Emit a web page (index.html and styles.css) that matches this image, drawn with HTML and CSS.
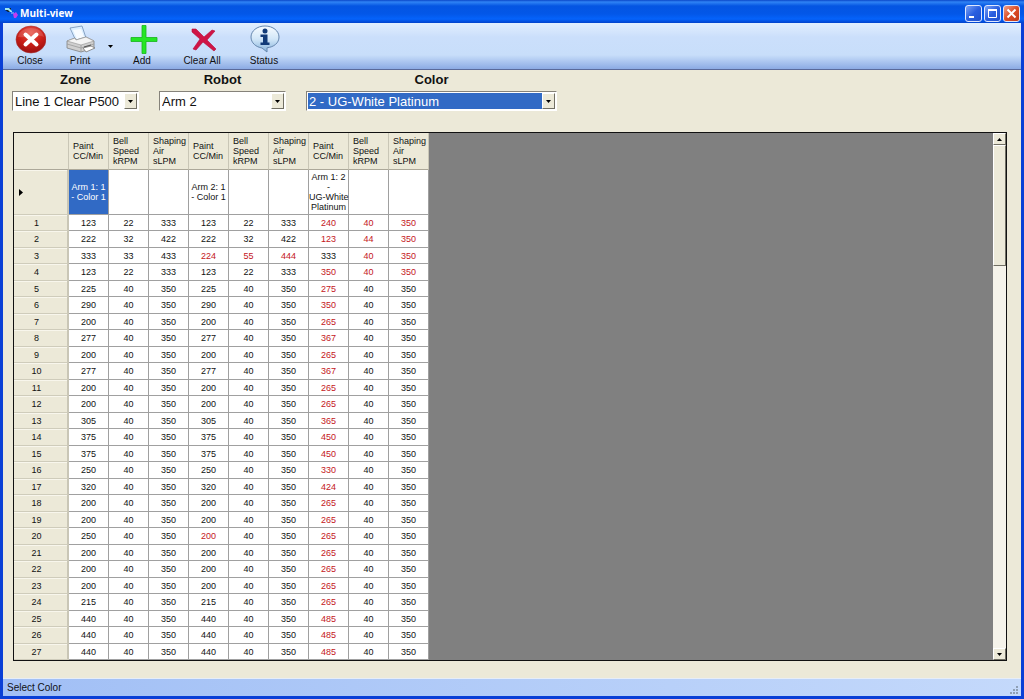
FILE: index.html
```html
<!DOCTYPE html>
<html lang="en">
<head>
<meta charset="utf-8">
<title>Multi-view</title>
<link rel="stylesheet" href="styles.css">
</head>
<body>
<div class="window">
  <header class="titlebar">
    <svg class="app-icon" width="14" height="12" viewBox="0 0 14 12"><path d="M0 1h6v4H3L0 3z" fill="#123"/><path d="M0 1h4l3 3v1H5L3 3H0z" fill="#9fe6ee"/><path d="M6 6h3" stroke="#b8c8ff"/><path d="M8 7l3-2 2 3-2 3H9z" fill="#c43cf0"/></svg>
    <h1 class="title">Multi-view</h1>
    <div class="captions">
      <button class="cap" aria-label="Minimize"><svg width="15" height="15" viewBox="0 0 15 15"><path d="M3 11h5" stroke="#fff" stroke-width="2"/></svg></button>
      <button class="cap" aria-label="Maximize"><svg width="15" height="15" viewBox="0 0 15 15"><path d="M3.500 4v7.500h8V4" fill="none" stroke="#fff"/><path d="M3 4h9" stroke="#fff" stroke-width="2"/></svg></button>
      <button class="cap cap-close" aria-label="Close window"><svg width="15" height="15" viewBox="0 0 15 15"><path d="M3.500 3.500l8 8M11.500 3.500l-8 8" stroke="#fff" stroke-width="2"/></svg></button>
    </div>
  </header>
  <nav class="toolbar">
    <button class="tool tool-close"><svg width="32" height="30" viewBox="0 0 32 30"><defs><radialGradient id="red" cx=".5" cy=".25" r=".75"><stop offset="0" stop-color="#e8564a"/><stop offset=".55" stop-color="#cc1f18"/><stop offset="1" stop-color="#9c1010"/></radialGradient></defs><ellipse cx="17" cy="14.500" rx="15" ry="13.500" fill="url(#red)" stroke="#a33" stroke-width=".6"/><path d="M4 12C6 0 28 0 30 12 21 8 13 13 4 12z" fill="#fff" opacity=".15"/><path d="M11.500 9.500l11 10M22.500 9.500l-11 10" stroke="#fff" stroke-width="4" stroke-linecap="round"/></svg><span>Close</span></button>
    <button class="tool tool-print"><svg width="32" height="30" viewBox="0 0 32 30"><path d="M6 3l12-2 4 12-10 3z" fill="#dbeeff" stroke="#7390b5" stroke-width=".8"/><path d="M9 5l8-1 3 8-7 2z" fill="#f7fbff"/><path d="M3 16l8-3 1 2 10-3 8 4v7l-13 4-14-4z" fill="#cfcfcf" stroke="#808080" stroke-width=".8"/><path d="M3 16l8-3 1 2 10-3 8 4-13 4z" fill="#f4f4f4" stroke="#929292" stroke-width=".6"/><path d="M17 20v7M3 19l14 4 13-4" fill="none" stroke="#9a9a9a" stroke-width=".8"/><path d="M19 23l8-2 4 2-9 4z" fill="#fff" stroke="#777" stroke-width=".8"/><path d="M20 22l7-2" stroke="#555"/></svg><span>Print</span></button>
    <button class="drop" aria-label="Print options"><svg width="5" height="3" viewBox="0 0 5 3"><path d="M0 0h5L2.500 3z"/></svg></button>
    <button class="tool tool-add"><svg width="32" height="30" viewBox="0 0 32 30"><path d="M16 .5h4v12h11v4H20v12h-4v-12H5v-4h11z" fill="#25e625" stroke="#17b51c" stroke-width=".8"/></svg><span>Add</span></button>
    <button class="tool tool-clear"><svg width="32" height="30" viewBox="0 0 32 30"><path d="M6 4l4 0 8 8 8-7 3 1-8 9 9 9-2 2-11-9-7 8-3-1 7-10-8-7z" fill="#cf1446" stroke="#b50a35" stroke-width=".6"/></svg><span>Clear All</span></button>
    <button class="tool tool-status"><svg width="32" height="30" viewBox="0 0 32 30"><defs><linearGradient id="bub" x2="0" y2="1"><stop offset="0" stop-color="#f8fcff"/><stop offset=".5" stop-color="#d2e7f8"/><stop offset="1" stop-color="#86b3dc"/></linearGradient></defs><path d="M17 1C9 1 3 6 3 12 3 18 8 22 14 23l5 4 0-4.200C26 22 31 18 31 12 31 6 25 1 17 1z" fill="url(#bub)" stroke="#6788ae"/><circle cx="17" cy="6" r="2.500" fill="#123b78"/><path d="M12.500 9.500h7v8h2v2.500h-9v-2.500h2.500v-5.500h-2.500z" fill="#123b78"/></svg><span>Status</span></button>
  </nav>
  <main class="content">
    <form class="filters">
      <div class="field field-zone"><label for="zone">Zone</label><div class="combo"><select id="zone"><option>Line 1 Clear P500</option></select><span class="arrow"><svg width="5" height="3" viewBox="0 0 5 3"><path d="M0 0h5L2.500 3z"/></svg></span></div></div>
      <div class="field field-robot"><label for="robot">Robot</label><div class="combo"><select id="robot"><option>Arm 2</option></select><span class="arrow"><svg width="5" height="3" viewBox="0 0 5 3"><path d="M0 0h5L2.500 3z"/></svg></span></div></div>
      <div class="field field-color"><label for="color">Color</label><div class="combo active"><select id="color"><option>2 - UG-White Platinum</option></select><span class="arrow"><svg width="5" height="3" viewBox="0 0 5 3"><path d="M0 0h5L2.500 3z"/></svg></span></div></div>
    </form>
    <section class="grid">
      <div class="viewport">
        <table class="data">
          <thead>
            <tr><th class="corner"></th><th>Paint<br>CC/Min</th><th>Bell<br>Speed<br>kRPM</th><th>Shaping<br>Air<br>sLPM</th><th>Paint<br>CC/Min</th><th>Bell<br>Speed<br>kRPM</th><th>Shaping<br>Air<br>sLPM</th><th>Paint<br>CC/Min</th><th>Bell<br>Speed<br>kRPM</th><th>Shaping<br>Air<br>sLPM</th></tr>
            <tr class="arms"><th class="rowhead"><svg width="4" height="7" viewBox="0 0 4 7"><path d="M0 0l4 3.500L0 7z"/></svg></th><td class="selected">Arm 1: 1<br>- Color 1</td><td></td><td></td><td>Arm 2: 1<br>- Color 1</td><td></td><td></td><td>Arm 1: 2<br>-<br>UG-White<br>Platinum</td><td></td><td></td></tr>
          </thead>
          <tbody id="rows"></tbody>
        </table>
      </div>
      <div class="scroll">
        <button class="step" aria-label="Scroll up"><svg width="5" height="3" viewBox="0 0 5 3"><path d="M0 3h5L2.500 0z"/></svg></button>
        <div class="track"><div class="thumb"></div></div>
        <button class="step" aria-label="Scroll down"><svg width="5" height="3" viewBox="0 0 5 3"><path d="M0 0h5L2.500 3z"/></svg></button>
      </div>
    </section>
  </main>
  <footer class="status"><span>Select Color</span><svg width="10" height="10" viewBox="0 0 10 10"><path d="M7 1h2M4 4h2M7 4h2M1 7h2M4 7h2M7 7h2" stroke="#8e9fb5" stroke-width="2"/></svg></footer>
</div>
<script src="grid.js"></script>
</body>
</html>
```
FILE: styles.css
```css
* { box-sizing: border-box; }
body { margin: 0; font-family: "Liberation Sans", Arial, sans-serif; font-size: 10px; color: #111; }
button { font: inherit; color: inherit; border: 0; padding: 0; background: none; }
svg { display: block; }

.window { height: 100vh; display: flex; flex-direction: column; border: 3px solid #0a3fd6; border-top: 0; background: #ece9d8; }
.titlebar { flex: none; height: 23px; margin: 0 -3px; padding: 3px 4px 0 5px; display: flex; align-items: center; background: linear-gradient(#0a47c8, #2f83f5 2px, #0455e2 6px, #0357e8 14px, #0563fb 19px, #0243cc); }
.title { flex: 1; margin: 0 0 0 1px; font: bold 10px "Open Sans", sans-serif; color: #fff; }
.captions { display: flex; gap: 2px; }
.cap { width: 17px; height: 17px; border: 1px solid #dfe8ff; border-radius: 3px; background: linear-gradient(135deg, #7ba2f5, #2a5fe0 50%, #1f50cc); }
.cap-close { background: linear-gradient(135deg, #f0a088, #dc4d26 50%, #c23a18); }

.toolbar { flex: none; height: 47px; display: flex; border-bottom: 1px solid #5a6a9a; background: linear-gradient(#e2effe, #cbdffb 14px, #c8defa 32px, #8cabe4); }
.tool { display: flex; flex-direction: column; align-items: center; line-height: 12px; padding-top: 2px; }
.tool span { white-space: nowrap; }
.tool-close { width: 54px; }
.tool-print { width: 46px; }
.drop { width: 14px; }
.drop svg { margin: 0 auto; }
.tool-add { width: 50px; }
.tool-clear { width: 70px; }
.tool-status { width: 54px; }

.content { flex: 1; min-height: 0; display: flex; flex-direction: column; padding: 2px 14px 17px 10px; }
.filters { display: flex; align-items: flex-start; margin: 0 0 21px -1px; gap: 20px; }
.field { display: flex; flex-direction: column; gap: 4px; }
.field label { text-align: center; font-size: 13px; line-height: 15px; font-weight: bold; }
.field-zone, .field-robot { width: 127px; }
.field-color { width: 251px; }
.combo { display: flex; height: 20px; border: 1px solid; border-color: #85827a #fff #fff #85827a; background: #fff; padding: 1px; }
.combo select { flex: 1; min-width: 0; appearance: none; border: 0; border-radius: 0; padding: 0 1px; background: #fff; color: #111; font: 13px "Liberation Sans", Arial, sans-serif; }
.combo.active select { background: #316ac5; color: #fff; }
.arrow { flex: none; width: 13px; display: grid; place-items: center; background: #ece9d8; border: 1px solid; border-color: #fff #716f64 #716f64 #fff; }

.grid { flex: 1; min-height: 0; display: flex; border: 1px solid #111; background: #808080; }
.viewport { flex: 1; min-width: 0; overflow: hidden; }
.data { width: 415px; table-layout: fixed; border-collapse: separate; border-spacing: 0; background: #fff; font-size: 9px; line-height: 10px; }
.data th { font-weight: normal; background: #ece9d8; padding: 0 0 0 4px; text-align: left; height: 37px; border-right: 1px solid #c9c6b6; border-bottom: 1px solid #aca899; }
.data .corner { width: 55px; }
.data td { padding: 0; text-align: center; border-right: 1px solid #a0a0a0; border-bottom: 1px solid #a0a0a0; }
.data .arms td { height: 45px; white-space: nowrap; }
.data .selected { background: #316ac5; color: #fff; }
.data .rowhead { height: auto; padding: 0 8px 0 0; text-align: center; border-right: 2px solid #c9c6b6; border-bottom-color: #cfccbb; box-shadow: inset 0 1px #f8f6ec; }
.data .arms .rowhead { padding-left: 5px; }
.data tbody tr { height: 16px; }
.data tbody tr:nth-child(even) { height: 17px; }
.changed { color: #c4161c; }

.scroll { flex: none; width: 13px; display: flex; flex-direction: column; background: #f5f3ea; }
.step { height: 12px; display: grid; place-items: center; background: #ece9d8; border: 1px solid; border-color: #fff #716f64 #716f64 #fff; }
.track { flex: 1; }
.thumb { height: 24%; background: #ece9d8; border: 1px solid; border-color: #fff #716f64 #716f64 #fff; }

.status { flex: none; height: 18px; display: flex; justify-content: space-between; align-items: center; padding: 0 2px 0 4px; border-top: 1px solid #e6edf8; background: linear-gradient(90deg, #a1bff5, #c4d9fb); }
.status svg { align-self: flex-end; }
```
FILE: grid.js
```js
// Base paint, bell speed, shaping air, comparison paint
const base = [
  [123, 22, 333, 240], [222, 32, 422, 123], [333, 33, 433, 333], [123, 22, 333, 350],
  [225, 40, 350, 275], [290, 40, 350, 350], [200, 40, 350, 265], [277, 40, 350, 367],
  [200, 40, 350, 265], [277, 40, 350, 367], [200, 40, 350, 265], [200, 40, 350, 265],
  [305, 40, 350, 365], [375, 40, 350, 450], [375, 40, 350, 450], [250, 40, 350, 330],
  [320, 40, 350, 424], [200, 40, 350, 265], [200, 40, 350, 265], [250, 40, 350, 265],
  [200, 40, 350, 265], [200, 40, 350, 265], [200, 40, 350, 265], [215, 40, 350, 265],
  [440, 40, 350, 485], [440, 40, 350, 485], [440, 40, 350, 485]
];
const second = { 3: [224, 55, 444], 20: [200, 40, 350] };
const body = document.getElementById("rows");

base.forEach(([paint, bell, air, other], i) => {
  const first = [paint, bell, air];
  const values = [...first, ...(second[i + 1] || first), other, i === 1 ? 44 : 40, 350];
  const row = body.insertRow();
  const head = document.createElement("th");
  head.className = "rowhead";
  head.scope = "row";
  head.textContent = i + 1;
  row.append(head);
  values.forEach((value, c) => {
    const cell = row.insertCell();
    cell.textContent = value;
    if (value !== first[c % 3]) cell.className = "changed";
  });
});
```
